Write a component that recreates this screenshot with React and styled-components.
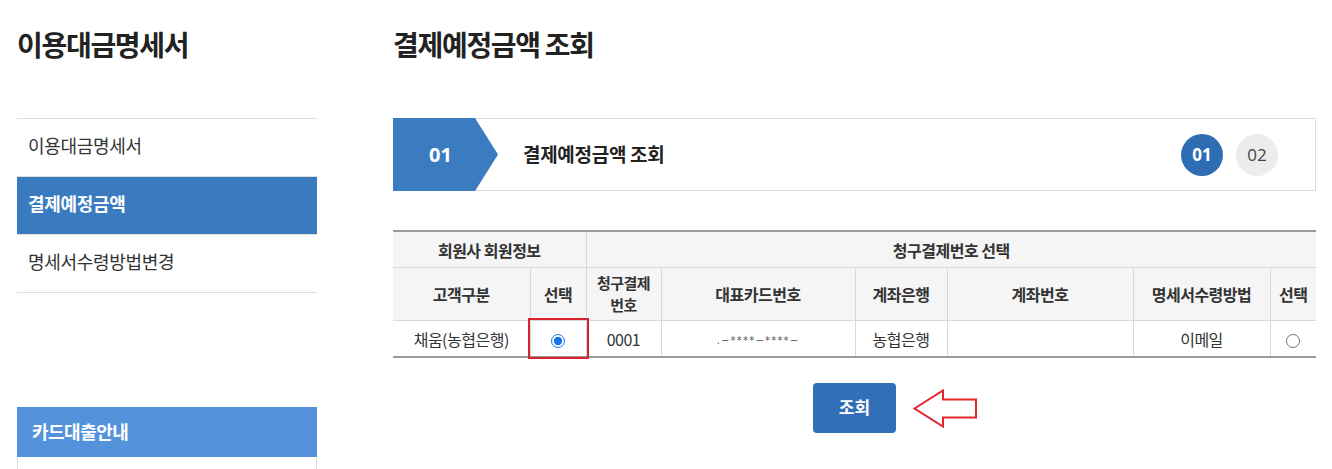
import React from 'react';
import styled, { createGlobalStyle } from 'styled-components';

const GlobalStyle = createGlobalStyle`
	html, body {
		margin: 0;
		padding: 0;
		background: #fff;
	}
	body {
		font-family: "Noto Sans CJK KR", "Noto Sans", sans-serif;
		color: #333;
	}
`;

const Page = styled.div`
	display: flex;
	align-items: flex-start;
	padding-left: 17px;
	width: 1332px;
	height: 469px;
	overflow: hidden;
	box-sizing: border-box;
`;

const Sidebar = styled.aside`
	width: 300px;
	flex-shrink: 0;
`;

const Main = styled.main`
	width: 923px;
	margin-left: 76px;
	flex-shrink: 0;
`;

const PageTitle = styled.h1`
	margin: 0;
	height: 118px;
	padding-top: 24px;
	box-sizing: border-box;
	font-size: 28px;
	line-height: 40px;
	font-weight: 700;
	letter-spacing: -1.3px;
	color: #222;
`;

const NavList = styled.ul`
	list-style: none;
	margin: 0;
	padding: 0;
	border-top: 1px solid #ddd;
`;

const NavItem = styled.li`
	height: 58px;
	display: flex;
	align-items: center;
	padding: 0 0 5px 11px;
	box-sizing: border-box;
	border-bottom: 1px solid #ddd;
	font-size: 18px;
	letter-spacing: -0.3px;
	font-weight: ${(p) => (p.active ? 700 : 400)};
	color: ${(p) => (p.active ? '#fff' : '#333')};
	background: ${(p) => (p.active ? '#3a7bc0' : 'transparent')};
`;

const LoanBox = styled.div`
	margin-top: 114px;
`;

const LoanHead = styled.div`
	height: 50px;
	display: flex;
	align-items: center;
	padding: 0 0 3px 15px;
	box-sizing: border-box;
	background: #5592dc;
	color: #fff;
	font-size: 18px;
	font-weight: 700;
	letter-spacing: -0.5px;
`;

const LoanBody = styled.div`
	height: 60px;
	border: 1px solid #ddd;
	border-top: 0;
`;

const StepBar = styled.div`
	height: 73px;
	display: flex;
	align-items: center;
	border: 1px solid #ddd;
	box-sizing: border-box;
`;

const StepNo = styled.div`
	align-self: stretch;
	margin: -1px 0 -1px -1px;
	width: 105px;
	display: flex;
	align-items: center;
	padding-left: 36px;
	box-sizing: border-box;
	background: #3b7bc0;
	clip-path: polygon(0 0, 82px 0, 105px 50%, 82px 100%, 0 100%);
	color: #fff;
	font-family: "Open Sans", "Noto Sans", sans-serif;
	font-size: 20px;
	font-weight: 700;
`;

const StepTitle = styled.div`
	margin: 0 0 3px 25px;
	flex: 1;
	font-size: 19px;
	font-weight: 700;
	letter-spacing: -0.3px;
	color: #222;
`;

const Dots = styled.div`
	display: flex;
	gap: 13px;
	margin-right: 37px;
`;

const Dot = styled.span`
	width: 42px;
	height: 42px;
	border-radius: 50%;
	display: flex;
	align-items: center;
	justify-content: center;
	font-family: "Open Sans", "Noto Sans", sans-serif;
	font-size: 17px;
	font-weight: ${(p) => (p.on ? 700 : 400)};
	color: ${(p) => (p.on ? '#fff' : '#444')};
	background: ${(p) => (p.on ? '#2e6db4' : '#ececec')};
`;

const Table = styled.table`
	margin-top: 39px;
	width: 923px;
	table-layout: fixed;
	border-collapse: collapse;
	border-top: 2px solid #9a9a9a;
	border-bottom: 2px solid #9a9a9a;
	font-size: 16px;
	letter-spacing: -0.5px;
	color: #333;
`;

const Th = styled.th`
	height: ${(p) => (p.tall ? 52 : 35)}px;
	padding: 0;
	border: 1px solid #d8d8d8;
	background: #f5f5f5;
	font-size: ${(p) => (p.stacked ? 15 : 16)}px;
	font-weight: 700;
	line-height: ${(p) => (p.stacked ? 22 : 20)}px;
	text-align: center;
	&:first-child { border-left: 0; }
	&:last-child { border-right: 0; }
`;

const Td = styled.td`
	position: relative;
	height: 35px;
	padding: 0;
	border: 1px solid #d8d8d8;
	line-height: 20px;
	text-align: center;
	&:first-child { border-left: 0; }
	&:last-child { border-right: 0; }
`;

const Marked = styled.span`
	position: absolute;
	left: -3px;
	top: -3px;
	right: -3px;
	bottom: -3px;
	border: 2px solid #d9232e;
	pointer-events: none;
`;

const Masked = styled.span`
	font-family: "DejaVu Sans", sans-serif;
	font-size: 10px;
	letter-spacing: 1.2px;
	color: #555;
`;

const Radio = styled.input`
	margin: 0;
	width: 14px;
	height: 14px;
	vertical-align: middle;
	accent-color: #1a73e8;
`;

const ButtonRow = styled.div`
	position: relative;
	display: flex;
	justify-content: center;
	margin-top: 25px;
`;

const Button = styled.button`
	width: 83px;
	height: 50px;
	padding: 0 0 3px;
	border: 0;
	border-radius: 4px;
	background: #3170b8;
	color: #fff;
	font-family: "Noto Sans CJK KR", sans-serif;
	font-size: 17px;
	font-weight: 700;
`;

const Pointer = styled.svg`
	position: absolute;
	left: calc(50% + 58px);
	top: 6px;
`;

const cols = [137, 56, 75, 194, 92, 186, 137, 46];

export default function App() {
	return (
		<>
			<GlobalStyle />
			<Page>
				<Sidebar>
					<PageTitle>이용대금명세서</PageTitle>
					<NavList>
						<NavItem>이용대금명세서</NavItem>
						<NavItem active>결제예정금액</NavItem>
						<NavItem>명세서수령방법변경</NavItem>
					</NavList>
					<LoanBox>
						<LoanHead>카드대출안내</LoanHead>
						<LoanBody />
					</LoanBox>
				</Sidebar>

				<Main>
					<PageTitle>결제예정금액 조회</PageTitle>
					<StepBar>
						<StepNo>01</StepNo>
						<StepTitle>결제예정금액 조회</StepTitle>
						<Dots>
							<Dot on>01</Dot>
							<Dot>02</Dot>
						</Dots>
					</StepBar>

					<Table>
						<colgroup>
							{cols.map((w, i) => (
								<col key={i} style={{ width: w }} />
							))}
						</colgroup>
						<thead>
							<tr>
								<Th colSpan={2}>회원사 회원정보</Th>
								<Th colSpan={6}>청구결제번호 선택</Th>
							</tr>
							<tr>
								<Th tall>고객구분</Th>
								<Th tall>선택</Th>
								<Th tall stacked>
									청구결제
									<br />
									번호
								</Th>
								<Th tall>대표카드번호</Th>
								<Th tall>계좌은행</Th>
								<Th tall>계좌번호</Th>
								<Th tall>명세서수령방법</Th>
								<Th tall>선택</Th>
							</tr>
						</thead>
						<tbody>
							<tr>
								<Td>채움(농협은행)</Td>
								<Td>
									<Radio type="radio" name="member" defaultChecked />
									<Marked />
								</Td>
								<Td>0001</Td>
								<Td>
									<Masked>.−****−****−</Masked>
								</Td>
								<Td>농협은행</Td>
								<Td />
								<Td>이메일</Td>
								<Td>
									<Radio type="radio" name="bill" />
								</Td>
							</tr>
						</tbody>
					</Table>

					<ButtonRow>
						<Button type="button">조회</Button>
						<Pointer width="65" height="39" viewBox="0 0 65 39">
							<path
								d="M1.5 19.5 L30 1.5 L30 10.5 L63 10.5 L63 28.5 L30 28.5 L30 37.5 Z"
								fill="#fff"
								stroke="#e0262b"
								strokeWidth="2"
								strokeLinejoin="miter"
							/>
						</Pointer>
					</ButtonRow>
				</Main>
			</Page>
		</>
	);
}
